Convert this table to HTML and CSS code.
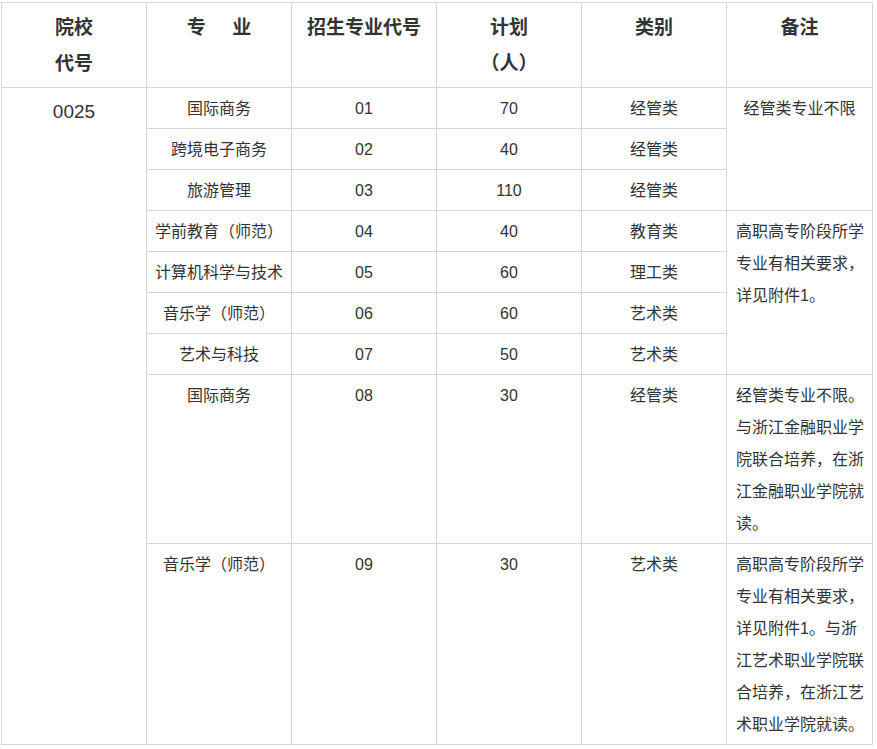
FILE: index.html
```html
<!DOCTYPE html>
<html lang="zh-CN">
<head>
<meta charset="utf-8">
<title>招生计划</title>
<link rel="stylesheet" href="styles.css">
</head>
<body>
<table class="plan">
  <colgroup>
    <col class="c"><col class="c"><col class="c"><col class="c"><col class="c"><col class="c-last">
  </colgroup>
  <thead>
    <tr>
      <th>院校<br>代号</th>
      <th>专&nbsp;&nbsp;&nbsp;&nbsp;&nbsp;业</th>
      <th>招生专业代号</th>
      <th>计划<br>（人）</th>
      <th>类别</th>
      <th>备注</th>
    </tr>
  </thead>
  <tbody>
    <tr>
      <td class="code" rowspan="9">0025</td>
      <td>国际商务</td><td>01</td><td>70</td><td>经管类</td>
      <td class="note center" rowspan="3">经管类专业不限</td>
    </tr>
    <tr><td>跨境电子商务</td><td>02</td><td>40</td><td>经管类</td></tr>
    <tr><td>旅游管理</td><td>03</td><td>110</td><td>经管类</td></tr>
    <tr>
      <td>学前教育（师范）</td><td>04</td><td>40</td><td>教育类</td>
      <td class="note" rowspan="4">高职高专阶段所学专业有相关要求，详见附件1。</td>
    </tr>
    <tr><td>计算机科学与技术</td><td>05</td><td>60</td><td>理工类</td></tr>
    <tr><td>音乐学（师范）</td><td>06</td><td>60</td><td>艺术类</td></tr>
    <tr><td>艺术与科技</td><td>07</td><td>50</td><td>艺术类</td></tr>
    <tr>
      <td>国际商务</td><td>08</td><td>30</td><td>经管类</td>
      <td class="note">经管类专业不限。与浙江金融职业学院联合培养，在浙江金融职业学院就读。</td>
    </tr>
    <tr>
      <td>音乐学（师范）</td><td>09</td><td>30</td><td>艺术类</td>
      <td class="note">高职高专阶段所学专业有相关要求，详见附件1。与浙江艺术职业学院联合培养，在浙江艺术职业学院就读。</td>
    </tr>
  </tbody>
</table>
</body>
</html>
```
FILE: styles.css
```css
html, body {
  margin: 0;
  background: #ffffff;
}
body {
  padding: 2px 0 0 1px;
  font-family: "Liberation Sans", "Noto Sans CJK SC", sans-serif;
  color: #333333;
}
.plan {
  border-collapse: collapse;
  table-layout: fixed;
  width: 872px;
}
.plan .c { width: 145px; }
.plan .c-last { width: 146px; }
.plan th,
.plan td {
  border: 1px solid #d6d6d6;
  vertical-align: top;
  text-align: center;
}
.plan th {
  font-size: 19px;
  font-weight: bold;
  line-height: 36px;
  padding: 7px 8px 5px 8px;
  color: #333333;
}
.plan td {
  font-size: 16px;
  line-height: 32px;
  padding: 5px 7px 3px 7px;
}
.plan td.code {
  font-size: 19px;
  padding-top: 8px;
}
.plan td.note {
  text-align: left;
  word-break: break-all;
  padding-left: 9px;
  padding-right: 5px;
}
.plan td.note.center {
  text-align: center;
  padding-left: 7px;
  padding-right: 7px;
}
```
